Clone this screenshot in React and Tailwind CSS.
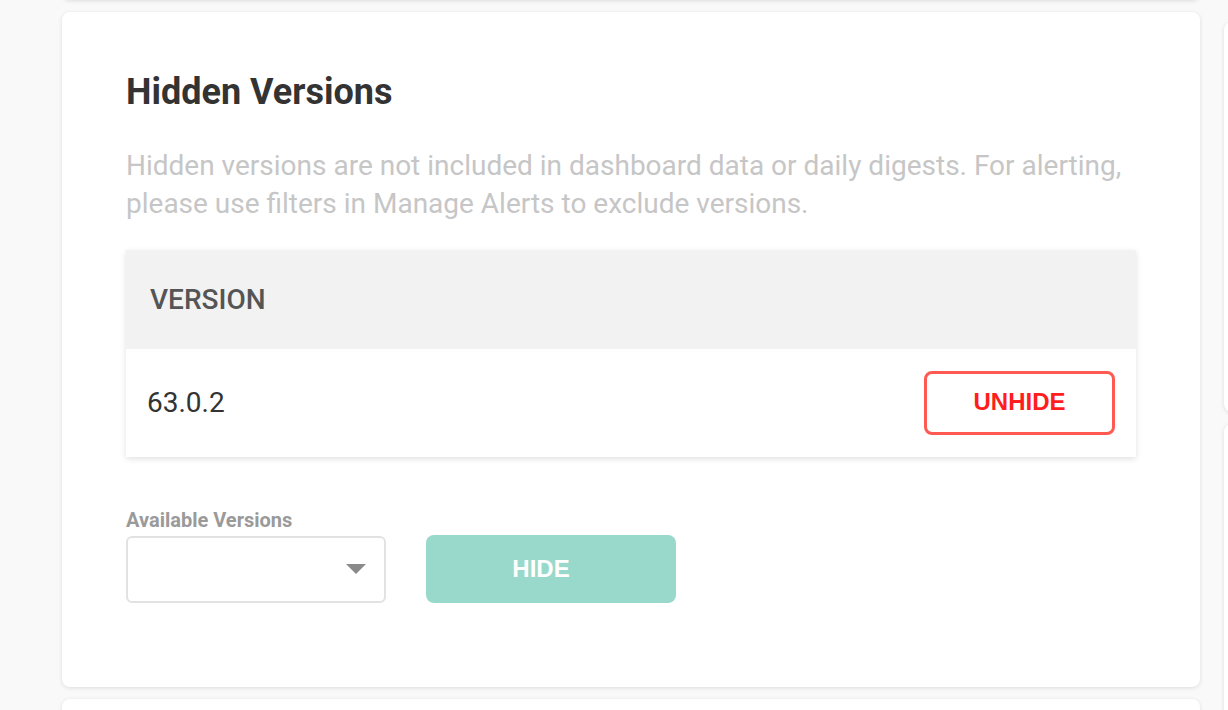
import React from "react";

const HiddenVersions = () => {
  return (
    <div className="bg-white rounded-lg shadow-[0_1px_4px_rgba(0,0,0,0.12)] px-16 pt-[61px] pb-[84px]">
      <h2 className="text-[36px] leading-[38px] font-bold text-[#333]">Hidden Versions</h2>
      <p className="mt-[36px] text-[28px] leading-[38px] text-[#c6c6c6]">
        Hidden versions are not included in dashboard data or daily digests. For alerting,
        please use filters in Manage Alerts to exclude versions.
      </p>

      {/* Table */}
      <div className="mt-[27px] shadow-[0_2px_6px_rgba(0,0,0,0.12)]">
        <div className="h-[99px] bg-[#f2f2f2] flex items-center px-6">
          <span className="text-[28px] font-medium text-[#555]">VERSION</span>
        </div>
        <div className="h-[108px] bg-white flex items-center justify-between pl-[21px] pr-[21px]">
          <span className="text-[28px] text-[#333]">63.0.2</span>
          <button
            className="w-[191px] h-[64px] border-[3px] border-[#ff5a52] rounded-lg text-[#ff1d1d] text-[24px] font-bold pb-[2px]"
            style={{ fontFamily: '"Liberation Sans", Arial, sans-serif' }}
          >
            UNHIDE
          </button>
        </div>
      </div>

      {/* Hide form */}
      <div className="mt-[51px] flex items-end gap-10">
        <div className="flex flex-col">
          <label className="text-[20px] leading-[24px] font-bold text-[#9a9a9a] mb-[4px]">
            Available Versions
          </label>
          <div className="w-[260px] h-[67px] border-2 border-[#e2e2e2] rounded-md flex items-center justify-end pr-[18px]">
            <svg width="20" height="11" viewBox="0 0 20 11">
              <path d="M0 0 L20 0 L10 10 Z" fill="#8a8a8a" />
            </svg>
          </div>
        </div>
        <button
          className="w-[250px] h-[68px] bg-[#99d9cb] rounded-lg text-white text-[24px] font-bold pr-5"
          style={{ fontFamily: '"Liberation Sans", Arial, sans-serif' }}
        >
          HIDE
        </button>
      </div>
    </div>
  );
};

const App = () => {
  return (
    <div
      className="h-[710px] w-[1228px] overflow-hidden bg-[#f9f9f9]"
      style={{ fontFamily: "Roboto, sans-serif" }}
    >
      <div className="flex gap-6 pl-[62px]">
        <div className="w-[1138px] shrink-0 flex flex-col gap-3 -mt-[100px]">
          <div className="h-[100px] bg-white rounded-lg shadow-[0_1px_4px_rgba(0,0,0,0.12)]" />
          <HiddenVersions />
          <div className="h-[200px] bg-white rounded-lg shadow-[0_1px_4px_rgba(0,0,0,0.12)]" />
        </div>
        <div className="w-[400px] shrink-0 flex flex-col gap-3 pt-[22px]">
          <div className="h-[390px] bg-white rounded-lg shadow-[0_1px_4px_rgba(0,0,0,0.12)]" />
          <div className="h-[400px] bg-white rounded-lg shadow-[0_1px_4px_rgba(0,0,0,0.12)]" />
        </div>
      </div>
    </div>
  );
};

export default App;
